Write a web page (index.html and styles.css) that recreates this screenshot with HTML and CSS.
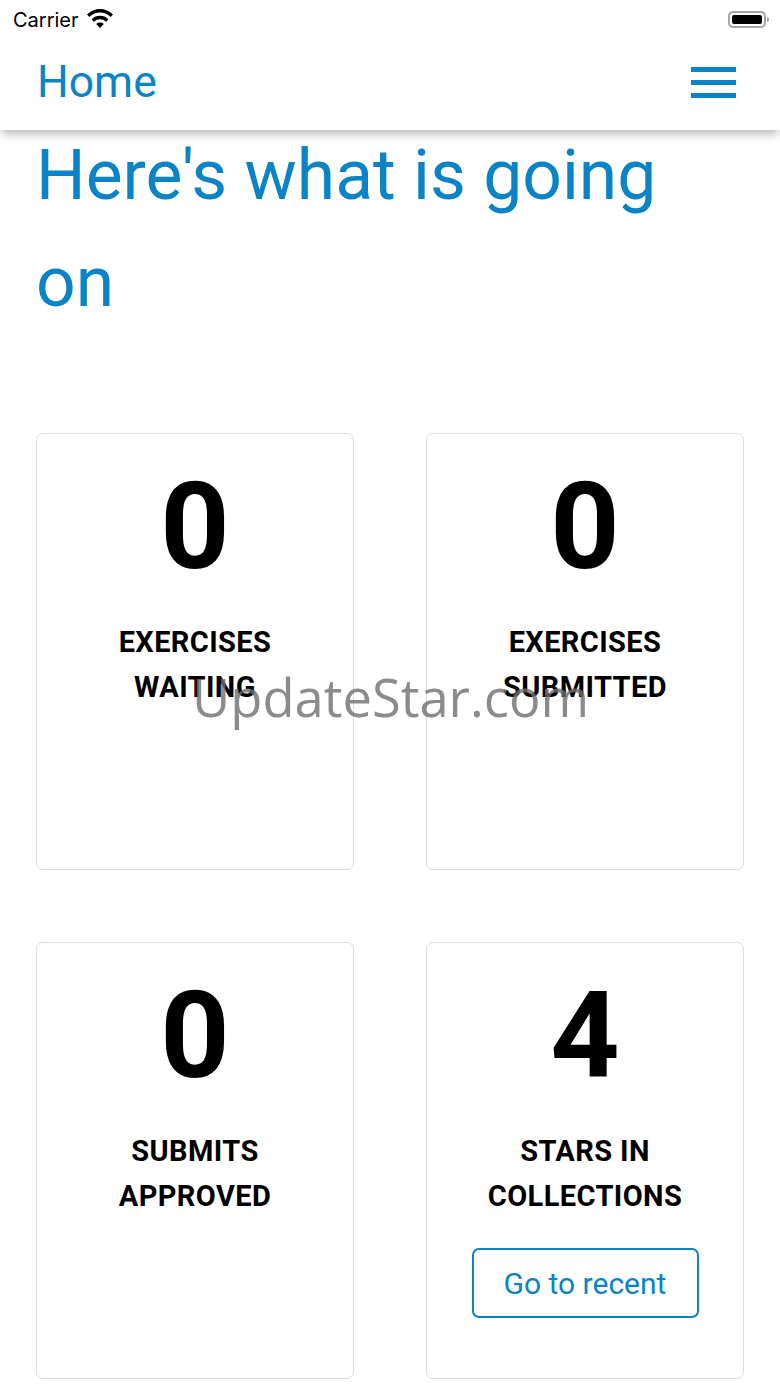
FILE: index.html
```html
<!DOCTYPE html>
<html lang="en">
<head>
  <meta charset="UTF-8">
  <meta name="viewport" content="width=device-width, initial-scale=1.0">
  <title>Home</title>
  <link rel="stylesheet" href="styles.css">
</head>
<body>
  <div class="status-bar">
    <div class="carrier">
      <span>Carrier</span>
      <svg class="wifi" width="28" height="22" viewBox="0 0 28 22">
        <path d="M14 21 L10.2 16.9 A5.6 5.6 0 0 1 17.8 16.9 Z" fill="#000"/>
        <path d="M5.6 12.2 A12 12 0 0 1 22.4 12.2 L20 14.7 A8.6 8.6 0 0 0 8 14.7 Z" fill="#000"/>
        <path d="M1 7.4 A18.5 18.5 0 0 1 27 7.4 L24.6 9.9 A15 15 0 0 0 3.4 9.9 Z" fill="#000"/>
      </svg>
    </div>
    <div class="battery">
      <div class="battery-level"></div>
    </div>
  </div>

  <header class="app-header">
    <span class="page-title">Home</span>
    <button class="menu-button" aria-label="Menu">
      <span></span>
      <span></span>
      <span></span>
    </button>
  </header>

  <main class="content">
    <h1>Here's what is going on</h1>

    <div class="stats-grid">
      <div class="stat-card">
        <div class="stat-number">0</div>
        <div class="stat-label">EXERCISES WAITING</div>
      </div>
      <div class="stat-card">
        <div class="stat-number">0</div>
        <div class="stat-label">EXERCISES SUBMITTED</div>
      </div>
      <div class="stat-card">
        <div class="stat-number">0</div>
        <div class="stat-label">SUBMITS APPROVED</div>
      </div>
      <div class="stat-card">
        <div class="stat-number">4</div>
        <div class="stat-label">STARS IN COLLECTIONS</div>
        <button class="recent-button">Go to recent</button>
      </div>
    </div>
  </main>

  <div class="watermark">UpdateStar.com</div>
</body>
</html>
```

FILE: styles.css
```css
body {
  margin: 0;
  font-family: Roboto, "Liberation Sans", sans-serif;
  background: #fff;
  color: #000;
  width: 780px;
  height: 1387px;
  overflow: hidden;
  position: relative;
}

.status-bar {
  height: 40px;
  display: flex;
  align-items: center;
  justify-content: space-between;
  padding: 0 14px 0 13px;
  box-sizing: border-box;
  background: #fff;
  position: relative;
  z-index: 2;
}

.carrier {
  display: flex;
  align-items: center;
  gap: 7px;
  font-family: Inter, Roboto, sans-serif;
  font-size: 20px;
}

.wifi {
  margin-top: -4px;
}

.battery {
  width: 38px;
  height: 17px;
  border: 2px solid #a6a6a6;
  border-radius: 5px;
  padding: 2px;
  box-sizing: border-box;
  position: relative;
  margin-top: -2px;
}

.battery::after {
  content: "";
  position: absolute;
  right: -5px;
  top: 4px;
  width: 2px;
  height: 5px;
  background: #a6a6a6;
  border-radius: 0 2px 2px 0;
}

.battery-level {
  width: 100%;
  height: 100%;
  background: #000;
  border-radius: 2px;
}

.app-header {
  height: 90px;
  display: flex;
  align-items: center;
  justify-content: space-between;
  padding: 0 44px 0 37px;
  background: #fff;
  box-shadow: 0 6px 9px -2px rgba(0, 0, 0, 0.28);
  position: relative;
  z-index: 1;
}

.page-title {
  font-size: 44.5px;
  color: #0a84c6;
  margin-top: -6px;
}

.menu-button {
  width: 45px;
  padding: 0;
  border: none;
  background: none;
  display: flex;
  flex-direction: column;
  gap: 8px;
  margin-top: -5px;
}

.menu-button span {
  display: block;
  height: 5px;
  background: #0a84c6;
}

.content {
  padding: 0 36px;
}

h1 {
  margin: -8px 0 0;
  font-size: 69.6px;
  font-weight: 400;
  line-height: 107px;
  color: #0a84c6;
}

.stats-grid {
  margin-top: 97px;
  display: grid;
  grid-template-columns: 318px 318px;
  gap: 72px;
}

.stat-card {
  height: 437px;
  box-sizing: border-box;
  border: 1px solid #dcdcdc;
  border-radius: 7px;
  padding-top: 33px;
  display: flex;
  flex-direction: column;
  align-items: center;
  text-align: center;
}

.stat-number {
  font-size: 121px;
  font-weight: 700;
  line-height: 1;
}

.stat-label {
  margin-top: 32px;
  width: 250px;
  font-size: 29px;
  font-weight: 700;
  line-height: 45px;
  letter-spacing: 0.4px;
}

.recent-button {
  margin-top: 29px;
  width: 227px;
  height: 70px;
  border: 2px solid #0a84c6;
  border-radius: 7px;
  background: #fff;
  color: #0a84c6;
  font-family: Roboto, sans-serif;
  font-size: 30px;
}

.watermark {
  position: absolute;
  left: 192px;
  top: 661px;
  font-family: "Open Sans", sans-serif;
  font-size: 52.5px;
  color: rgba(110, 110, 110, 0.8);
  pointer-events: none;
}
```
